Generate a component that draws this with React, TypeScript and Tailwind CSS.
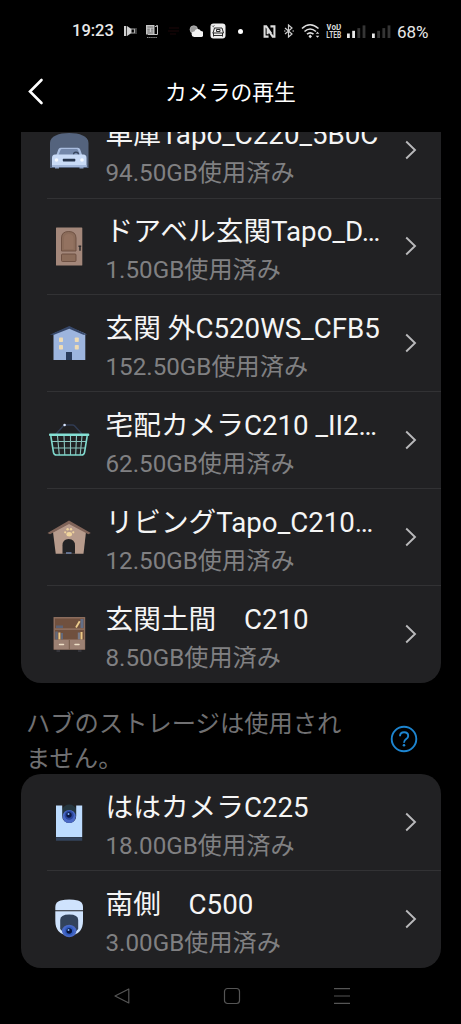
import type { ReactNode } from 'react';

interface Camera {
    name: string;
    used: string;
    icon: ReactNode;
}

function Icon({ children }: { children: ReactNode }) {
    return (
        <svg viewBox="0 0 44 44" fill="none" className="w-11 h-11 shrink-0">
            {children}
        </svg>
    );
}

const garage = (
    <Icon>
        <path d="M3 40V15C3 8 12 5 22.2 5s19.3 3 19.3 10v25z" fill="#54637d" />
        <path d="M9 28l2.300-6.500q.6-1.700 2.400-1.700h17.100q1.800 0 2.400 1.700L35.500 28z" fill="#a9bddf" />
        <path d="M11.500 27l2-5q.4-1 1.500-1h14.500q1.100 0 1.500 1l2 5z" fill="#7488ab" />
        <path d="M26.500 26.700q0-2.600 2.500-2.600t2.500 2.600" stroke="#35435c" strokeWidth="1.200" />
        <path d="M5 39v-9q0-3.500 3-3.500h28.500q3 0 3 3.500v9z" fill="#c9dbf7" />
        <path d="M8 38h4v2.500H8zM32.500 38h4v2.500h-4z" fill="#8fa4c8" />
        <rect x="15.800" y="30.800" width="12.500" height="2.600" rx=".6" fill="#26344c" />
        <circle cx="9.500" cy="32" r="1.800" fill="#f5f9ff" />
        <circle cx="35" cy="32" r="1.800" fill="#f5f9ff" />
        <path d="M5 37h34.500v2H5z" fill="#a5b9dc" />
    </Icon>
);

const door = (
    <Icon>
        <rect x="9" y="3.500" width="26.300" height="38" rx=".6" fill="#a3877a" />
        <path d="M14.500 27V14q0-6.500 7.200-6.500T29 14v13z" fill="#8b6c5a" stroke="#6a4d3e" strokeWidth=".9" />
        <path d="M17 25V14.500q0-4.500 4.700-4.500t4.800 4.500V25z" fill="#937260" />
        <rect x="14.500" y="30" width="14.500" height="7.500" rx="1" fill="#8b6c5a" stroke="#6a4d3e" strokeWidth=".9" />
        <path d="M31.500 22.300h2.700M33 22.300v4.500" stroke="#2f2a2b" strokeWidth="1.500" />
    </Icon>
);

const house = (
    <Icon>
        <path d="M6.500 12.500L22.300 6l16 6.500V39H6.500z" fill="#9db5de" />
        <path d="M2.800 13.800L22.300 5l18.200 8.800h-4.200L22.300 7.800 7 13.800z" fill="#37486a" />
        <g fill="#efdcb4">
            <rect x="12" y="16.500" width="4" height="4.500" rx=".8" />
            <rect x="27.800" y="16.500" width="4" height="4.500" rx=".8" />
            <rect x="12" y="24" width="4" height="4.500" rx=".8" />
            <rect x="27.800" y="24" width="4" height="4.500" rx=".8" />
        </g>
        <path d="M19 31h6v8h-6z" fill="#2b3c5b" />
    </Icon>
);

const basket = (
    <Icon>
        <path d="M9 16l7.500-8.200q.8-.9 2-.9h7q1.200 0 2 .9L35 16" stroke="#303b52" strokeWidth="1.500" />
        <circle cx="17.600" cy="7" r="1.300" fill="#dce8ff" />
        <path
            d="M4.500 23.500h35M5.500 30h33M10.500 18l1.800 19M17 18l.8 19M23.500 18v19M29.500 18l-.8 19M35 18l-1.800 19"
            stroke="#8ac5be"
            strokeWidth="1.100"
        />
        <path d="M3.800 18l2.700 16.500q.5 2.500 3 2.500h25q2.500 0 3-2.500L40.200 18" stroke="#7fd8cd" strokeWidth="1.600" />
        <rect x="2" y="15.500" width="40.300" height="2.600" rx="1" fill="#84e0d4" />
    </Icon>
);

const kennel = (
    <Icon>
        <path d="M6 17L22 8l17 9-2.500 21.800H8.700z" fill="#b79b8c" />
        <path d="M.5 18L22 5.500 43.800 18l-2.500 1.200L22 9 3 19.200z" fill="#806459" />
        <path d="M15.500 38.800v-8.300q0-6.500 6.200-6.500t6.300 6.500v8.300z" fill="#222224" />
        <path d="M19 38h5.500" stroke="#7489af" strokeWidth="1.500" />
        <g fill="#f0d49d">
            <ellipse cx="22.200" cy="19.200" rx="2.800" ry="2.200" />
            <circle cx="18.200" cy="17.300" r="1.100" />
            <circle cx="20.600" cy="14.200" r="1.200" />
            <circle cx="24" cy="14.200" r="1.200" />
            <circle cx="26.300" cy="17.300" r="1.100" />
        </g>
    </Icon>
);

const bookshelf = (
    <Icon>
        <path d="M9.500 37h3.500v3H9.500zM31 37h3.500v3H31z" fill="#34343a" />
        <rect x="6.500" y="5" width="31.700" height="32.800" rx=".5" fill="#8c6d5d" />
        <path d="M8 6.500h29v9.700H8zM8 18h29v9.500H8z" fill="#70503e" />
        <path d="M9 13.600h7v2.500H9z" fill="#5b6276" />
        <path d="M33.500 7h3v9h-3z" fill="#626e87" />
        <path d="M29 15.500l3.700-6.300" stroke="#ebcb8c" strokeWidth="1.800" />
        <path d="M8.300 19.500h2.500v8H8.300zM14 21h2v6.500h-2z" fill="#62687b" />
        <path d="M11.400 20.500h2v7h-2zM33.500 20h2v7.500h-2z" fill="#ecc986" />
        <path d="M30.800 20.500H33v7h-2.200z" fill="#777987" />
        <path d="M7 27.800h30.700v9.500H7z" fill="#9c8173" />
        <path d="M22.300 28v9.500" stroke="#69503f" strokeWidth=".8" />
        <path d="M12.500 32.500h4M28 32.500h4" stroke="#eee0c7" strokeWidth="1.500" strokeLinecap="round" />
    </Icon>
);

const panCamera = (
    <Icon>
        <path d="M15 10q2-5.500 7.300-5.500T29.500 10v7H15z" fill="#25363f" />
        <path d="M9 5.500h6.200V16a7 7 0 0 0 14 0V5.500h6V37H9z" fill="#bddcff" />
        <path d="M9 37.300h26.200v3.500H9z" fill="#34445d" />
        <circle cx="22.200" cy="16.500" r="6.600" fill="#4969c6" />
        <circle cx="22.200" cy="15.300" r="4.500" fill="#2b479e" />
        <circle cx="22" cy="15" r="2.700" fill="#0a1640" />
        <circle cx="21.500" cy="14" r="1" fill="#86b8ff" />
    </Icon>
);

const domeCamera = (
    <Icon>
        <path d="M8.300 13.200V10q0-5 5.200-6.400 8.700-2 17.500 0Q36 5 36 10v3.200z" fill="#cfe3fd" />
        <path d="M8.300 14.300H36V24q0 6-3 10-2 2.500-5 3.500H16.500q-3-1-5.200-3.500-3-4-3-10z" fill="#cfe3fd" />
        <path d="M13.200 32v-9q0-5.500 9-5.500t9 5.500v9q-4 5-9 5t-9-5z" fill="#33435b" />
        <ellipse cx="22.200" cy="34" rx="7.200" ry="6.200" fill="#4868c5" />
        <circle cx="22.200" cy="34" r="4.500" fill="#2e59bd" />
        <circle cx="22.200" cy="34" r="2.800" fill="#07133a" />
        <circle cx="21.500" cy="33" r="1" fill="#86b8ff" />
    </Icon>
);

const hubCameras: Camera[] = [
    { name: '車庫Tapo_C220_5B0C', used: '94.50GB', icon: garage },
    { name: 'ドアベル玄関Tapo_D…', used: '1.50GB', icon: door },
    { name: '玄関 外C520WS_CFB5', used: '152.50GB', icon: house },
    { name: '宅配カメラC210 _II2…', used: '62.50GB', icon: basket },
    { name: 'リビングTapo_C210…', used: '12.50GB', icon: kennel },
    { name: '玄関土間　C210', used: '8.50GB', icon: bookshelf },
];

const otherCameras: Camera[] = [
    { name: 'ははカメラC225', used: '18.00GB', icon: panCamera },
    { name: '南側　C500', used: '3.00GB', icon: domeCamera },
];

function CameraRow({ camera, last }: { camera: Camera; last: boolean }) {
    return (
        <div className="flex h-[96.9px] pl-[26.5px]">
            <div className="flex items-center pb-px">{camera.icon}</div>
            <div className="flex flex-col flex-1 min-w-0 pl-[14.500px] pt-[13.500px] whitespace-nowrap">
                <span className="text-[27.700px] leading-[39px] text-[#f5f5f5]">{camera.name}</span>
                <span className="text-[24.200px] leading-[38px] text-[#808082]">{camera.used}使用済み</span>
            </div>
            <div className="flex items-center pb-px pr-6">
                <svg viewBox="0 0 12 20" className="w-3 h-5" fill="none" stroke="#b9b9bb" strokeWidth="1.900">
                    <path d="M1.200 1.500L10 10l-8.800 8.500" />
                </svg>
            </div>
            {!last && <div className="self-end w-[394px] -ml-[394px] h-px bg-[#323234]" />}
        </div>
    );
}

function CameraCard({ cameras }: { cameras: Camera[] }) {
    return (
        <div className="mx-[20.500px] rounded-[20px] bg-[#212123] overflow-hidden">
            {cameras.map((camera, i) => (
                <CameraRow key={camera.name} camera={camera} last={i === cameras.length - 1} />
            ))}
        </div>
    );
}

function Signal({ active }: { active: number }) {
    return (
        <svg viewBox="0 0 19 15" className="w-[19px] h-[15px]">
            {[0, 1, 2, 3].map((i) => (
                <rect
                    key={i}
                    x={i * 5.2}
                    y={9.5 - i * 2.7}
                    width="2.800"
                    height={4.5 + i * 2.7}
                    fill={i < active ? '#e8e8e8' : '#353535'}
                />
            ))}
        </svg>
    );
}

function StatusBar() {
    return (
        <div className="flex items-center h-[62px] pl-[72px] text-[#e8e8e8]">
            <span className="w-[41px] text-[16.500px] font-medium leading-5">19:23</span>
            <svg viewBox="0 0 14 12" className="w-3.5 h-3 ml-[10px]" fill="none">
                <path d="M1 1h2.300v10H1zM4 1l4.500 3v4L4 11z" fill="#d0d0d0" />
                <path d="M8 4h3.500v4H8" stroke="#aaa" strokeWidth="1.200" />
                <path d="M13 3v6" stroke="#777" />
            </svg>
            <svg viewBox="0 0 14 15" className="w-3.5 h-[15px] ml-2" fill="none">
                <path d="M1 1h8.500v9.500H1z" fill="#c6c6c6" />
                <path d="M2.300 3h6M2.300 5.200h2.500M6 5.200h2.300M2.300 7h2.500M6 7h2.300M2.300 9h6" stroke="#444" strokeWidth=".7" />
                <path d="M10 2.500h1.500v-1h1v9H3" stroke="#c5c5c5" />
                <path d="M2 13.500h10.500" stroke="#8a8a8a" strokeWidth="1.200" strokeDasharray="1.500 .6" />
            </svg>
            <svg viewBox="0 0 14 10" className="w-3.5 h-2.5 ml-2" fill="none" stroke="#1d0609">
                <path d="M2 2h10M1 5h11M3 8h6" />
            </svg>
            <svg viewBox="0 0 14 12" className="w-3.5 h-3 ml-2">
                <circle cx="4.800" cy="4.500" r="3.800" fill="#9b9b9b" stroke="#ccc" strokeWidth=".6" />
                <path d="M5.500 12a2.800 2.800 0 0 1-.2-5.600 3.600 3.600 0 0 1 6.600-.5A3 3 0 0 1 11.200 12z" fill="#f4f4f4" />
            </svg>
            <svg viewBox="0 0 16 16" className="w-4 h-4 ml-[7px]" fill="none">
                <rect x=".5" y=".5" width="15" height="15" rx="3" fill="#efefef" />
                <path d="M3 10l1.500-5h7.500l1.500 5M2.500 10h11M3 12.500h10M3.500 10v3.500M12.500 10v3.500M6.500 8.500v-2h3.500v2z" stroke="#292929" strokeWidth="1" />
                <path d="M2 2.500l2 2M4.500 2L3 4" stroke="#555" strokeWidth=".7" />
            </svg>
            <div className="w-[5px] h-[5px] rounded-full bg-white ml-[12px]" />
            <svg viewBox="0 0 13 14" className="w-[13px] h-[13px] ml-5" fill="none" stroke="#dcdcdc" strokeWidth="2.200">
                <path d="M5.500 12.500H1.200v-11H3l5.500 8M7.500 1.500h4.300v11H10L4.500 4.500V10" />
            </svg>
            <svg viewBox="0 0 10 14" className="w-2.5 h-3.5 ml-2" fill="none" stroke="#cecece" strokeWidth="1.200">
                <path d="M1 4l7 6-3.500 3V1L8 4l-7 6" />
                <path d="M0 7h1.500M8.500 7H10" />
            </svg>
            <svg viewBox="0 0 20 16" className="w-5 h-4 ml-[7px]" fill="none" stroke="#dedede" strokeWidth="1.600">
                <path d="M1 5.500q8-7.500 16.500 0M3.500 8.500q5.500-5 11.500 0M6 11.200q3.200-2.700 6.500 0" />
                <path d="M9.200 11.500l1.800 2-1.800 1.700-1.700-1.700z" fill="#dedede" stroke="none" />
                <path d="M16.500 8.800l1.800 2h-3.600zM16.500 14.800l1.800-2h-3.600z" fill="#dedede" stroke="none" />
            </svg>
            <svg viewBox="0 0 16 14" className="w-4 h-3.5 ml-[5px] font-['Roboto'] font-bold" fill="#d8d8d8" fontSize="8.500">
                <text transform="translate(.3 6.300)" textLength="15" lengthAdjust="spacingAndGlyphs">
                    VoD
                </text>
                <text transform="translate(.3 13.600)" textLength="15" lengthAdjust="spacingAndGlyphs">
                    LTEB
                </text>
            </svg>
            <div className="ml-[5px]">
                <Signal active={2} />
            </div>
            <div className="ml-[6px]">
                <Signal active={1} />
            </div>
            <span className="ml-1.5 pt-0.5 text-[17px] leading-5">68%</span>
        </div>
    );
}

export default function App() {
    return (
        <div className="flex flex-col w-[461px] h-[1024px] overflow-hidden bg-black text-white font-['Roboto','Noto_Sans_CJK_JP',sans-serif]">
            <StatusBar />

            <header className="grid grid-cols-[60px_1fr_60px] items-center h-[60px] mb-[10px] shrink-0">
                <svg viewBox="0 0 18 28" className="w-[18px] h-7 ml-[27px]" fill="none" stroke="#fff" strokeWidth="2.600" strokeLinecap="round">
                    <path d="M14.500 2L3 13.500 14.500 25" />
                </svg>
                <h1 className="pt-0.5 text-center text-[21.800px] leading-8">カメラの再生</h1>
            </header>

            <main className="h-[836px] shrink-0 overflow-hidden">
                <div className="-mt-[30.400px]">
                    <CameraCard cameras={hubCameras} />
                    <div className="flex justify-between h-[91.200px] pl-[26px] pr-[43px]">
                        <p className="w-[324px] pt-[23.500px] text-[24.300px] leading-[35px] text-[#707072]">
                            ハブのストレージは使用されません。
                        </p>
                        <svg viewBox="0 0 28 28" className="w-7 h-7 mt-[42.500px]" fill="none" stroke="#1d85d0" strokeWidth="1.900">
                            <circle cx="14" cy="14" r="12.300" />
                            <path d="M10 11.200q0-4 4.100-4t4.100 3.700q0 1.700-2 3.200-2.200 1.600-2.200 3.600" />
                            <circle cx="14" cy="20.300" r="1.300" fill="#1d85d0" stroke="none" />
                        </svg>
                    </div>
                    <CameraCard cameras={otherCameras} />
                </div>
            </main>

            <nav className="flex flex-1 items-center justify-between pl-[113px] pr-[110px]">
                <svg viewBox="0 0 18 18" className="w-[18px] h-[18px]" fill="none" stroke="#555" strokeWidth="1.200" strokeLinejoin="round">
                    <path d="M2 9L15.800 2v14z" />
                </svg>
                <svg viewBox="0 0 18 18" className="w-[18px] h-[18px]" fill="none" stroke="#555" strokeWidth="1.200">
                    <rect x="1.500" y="1.500" width="15" height="15" rx="3" />
                </svg>
                <svg viewBox="0 0 18 18" className="w-[18px] h-[18px]" fill="none" stroke="#555" strokeWidth="1.200">
                    <path d="M1 1.700h16M1 9h16M1 16.300h16" />
                </svg>
            </nav>
        </div>
    );
}
